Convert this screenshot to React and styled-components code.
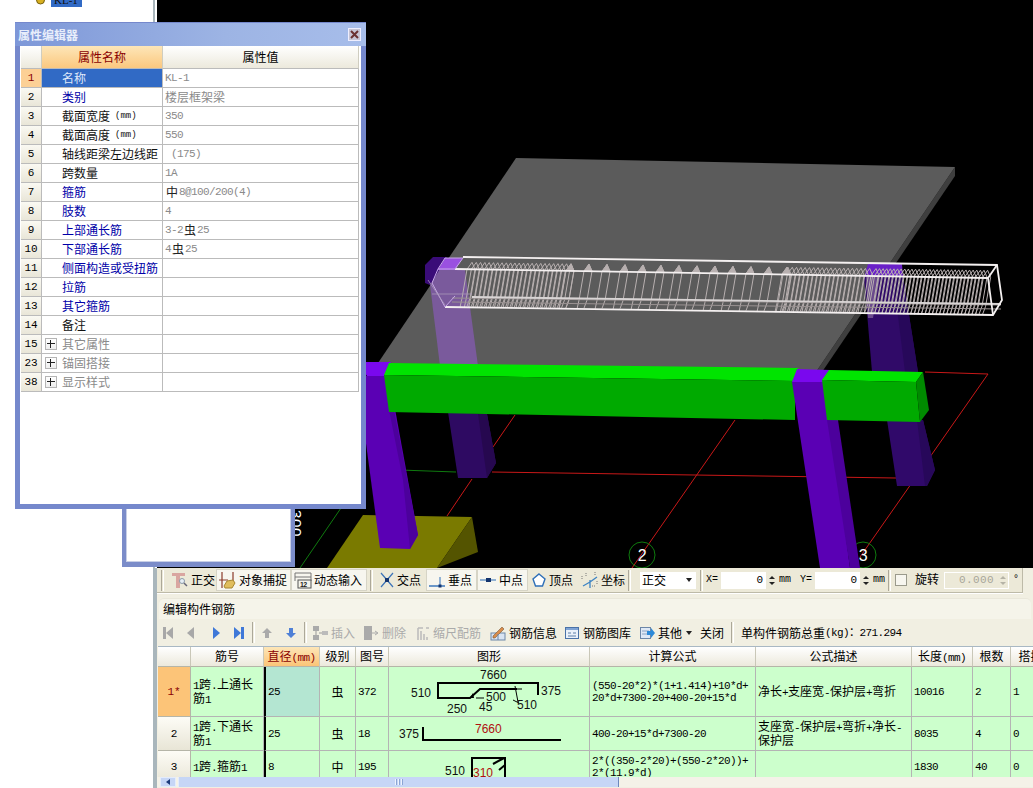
import React from "react";
import styled, { createGlobalStyle } from "styled-components";

const Global = createGlobalStyle`
  html, body { margin: 0; padding: 0; background: #fff; overflow: hidden; }
  body { width: 1033px; height: 788px; font-family: "Liberation Mono", "Noto Sans CJK SC", monospace; font-size: 11px; letter-spacing: -0.6px; color: #000; }
  * { box-sizing: border-box; }
`;

const Page = styled.div`display: flex; width: 1033px; height: 788px; overflow: hidden; position: relative;`;
const Sidebar = styled.aside`width: 155px; flex: none; background: #fff; border-right: 2px solid #a9b6bc; overflow: hidden;`;
const TreeRow = styled.div`display: flex; align-items: center; gap: 6px; height: 14px; margin-top: -7px; padding-left: 36px;`;
const TreeLabel = styled.span`background: #316ac5; width: 31px; height: 14px; line-height: 14px; padding-left: 3px; font-family: "Liberation Serif", serif; font-size: 11px; letter-spacing: 0; color: #111;`;
const Main = styled.main`flex: 1; min-width: 0; display: flex; flex-direction: column;`;
const Viewport = styled.div`height: 568px; background: #000; margin-left: 2px; flex: none; svg { display: block; }`;
const Bottom = styled.section`flex: 1; min-height: 0; background: #f1efe2; border-left: 2px solid #a9b6bc; display: flex; flex-direction: column; overflow: hidden;`;

const Han = styled.span`font-family: "Noto Sans CJK SC", sans-serif; font-size: 12px; letter-spacing: 0;`;
const T = ({ children }) => String(children).split(/([^\x00-\x7f：]+)/).map((s, i) => (i % 2 ? <Han key={i}>{s}</Han> : s));

const SnapBar = styled.div`display: flex; align-items: center; height: 25px; width: 866px; flex: none; padding-left: 4px; background: #ece9d8; border-bottom: 1px solid #bdbaa8; border-right: 1px solid #bdbaa8; box-shadow: 0 1px 0 #fff;`;
const Grip = styled.span`width: 3px; height: 21px; flex: none; border-left: 1px solid #aca899; border-right: 1px solid #fff; margin: 0 ${p => p.$r ?? 3}px 0 ${p => p.$l ?? 0}px;`;
const SnapBtn = styled.div`
  display: flex; align-items: center; gap: 2px; height: 22px; flex: none; width: ${p => p.$w}px; padding-left: 2px; line-height: 14px;
  background: ${p => (p.$on ? "#f7f6ef" : "transparent")};
  border: 1px solid ${p => (p.$on ? "#d6d4c6" : "transparent")};
`;
const Combo = styled.div`width: 56px; height: 17px; flex: none; background: #fff; display: flex; justify-content: space-between; align-items: center; padding: 0 4px 0 2px; margin-right: 4px; line-height: 14px;`;
const Caret = styled.span`width: 0; height: 0; border: 3px solid transparent; border-top: 4px solid #222; border-bottom: 0; margin-left: ${p => p.$l ?? 0}px;`;
const Label = styled.span`flex: none; width: ${p => p.$w}px; margin-left: ${p => p.$l ?? 0}px; line-height: 14px; font-size: 10px; letter-spacing: 0;`;
const Spin = styled.div`
  width: ${p => p.$w ?? 56}px; height: 17px; flex: none; background: ${p => (p.$off ? "#ece9d8" : "#fff")}; border: ${p => (p.$off ? "1px solid #fff" : "0")}; display: flex; align-items: center; justify-content: flex-end;
  color: ${p => (p.$off ? "#a8a698" : "#000")}; font-size: 11px; letter-spacing: ${p => (p.$off ? "0.4px" : 0)};
`;
const SpinArrows = styled.span`width: 11px; margin-left: 3px; height: 100%; display: flex; flex-direction: column; align-items: center; justify-content: center; gap: 3px; background: ${p => (p.$off ? "transparent" : "#ece9d8")};
  i { width: 0; height: 0; border: 3px solid transparent; border-bottom: 3px solid ${p => (p.$off ? "#b5b3a6" : "#222")}; border-top: 0; }
  i + i { border-top: 3px solid ${p => (p.$off ? "#b5b3a6" : "#222")}; border-bottom: 0; }
`;
const Check = styled.span`width: 12px; height: 12px; flex: none; background: #f7f6ef; border: 1px solid #9a9a8c; margin: 0 8px 0 4px;`;

const TitleBar = styled.div`height: 21px; margin: 5px 0 0 2px; width: 872px; flex: none; background: #f5f4ea; border-radius: 5px 5px 0 0; display: flex; align-items: center; padding-left: 4px; line-height: 14px; border-top: 1px solid #e9e7da;`;
const ActionBar = styled.div`display: flex; align-items: center; height: 27px; flex: none; line-height: 14px; white-space: nowrap;`;
const ActBtn = styled.div`display: flex; align-items: center; gap: 3px; flex: none; width: ${p => p.$w}px; color: ${p => (p.$off ? "#aaa" : "#000")};`;
const NavBtn = styled.div`width: ${p => p.$w ?? 24}px; flex: none; display: flex; justify-content: center;`;

const SheetWrap = styled.div`height: 131px; margin-left: 1px; flex: none; overflow: hidden; border-top: 1px solid #a9b8c4;`;
const Sheet = styled.div`display: grid; width: 893px; grid-template-columns: 33px 73px 56px 36px 33px 201px 166px 156px 61px 38px 40px; grid-template-rows: 20px 50px 34px 33px;`;
const Head = styled.div`
  display: flex; align-items: center; justify-content: center; line-height: 14px; white-space: nowrap;
  border-right: 1px solid #c9c7b8; border-bottom: 1px solid #b5b5a8;
  background: ${p => (p.$on ? "linear-gradient(#fde6b8,#fbc477)" : "linear-gradient(#fff,#ece9dc)")};
  color: ${p => (p.$on ? "#8a0000" : "#000")};
`;
const RowHead = styled.div`
  display: flex; align-items: center; justify-content: center; font-size: 11px; letter-spacing: 0;
  border-right: 1px solid #b5b5a8; border-bottom: 1px solid #b5b5a8;
  background: ${p => (p.$on ? "#fcc478" : "linear-gradient(#fdfcf6,#e8e5d6)")};
  color: ${p => (p.$on ? "#8a0000" : "#000")};
`;
const Cell = styled.div`
  display: flex; align-items: center; justify-content: ${p => (p.$center ? "center" : "flex-start")};
  padding: ${p => (p.$flush ? 0 : "0 2px")}; line-height: 12px; overflow: hidden;
  background: ${p => (p.$sel ? "#b4e6d2" : "#ccffcc")};
  border-right: 1px solid #b4b4b4; border-bottom: 1px solid #b4b4b4;
  ${p => p.$freeze && "border-left: 2px solid #000;"}
  svg { display: block; }
  ${Han} { line-height: 12px; }
`;
const Scroll = styled.div`height: 10px; flex: none; display: flex; background: #f4f2e8;`;
const ScrollLeft = styled.div`width: 16px; margin-left: 3px; background: #c6d6f6; border: 1px solid #e4ecfb; display: flex; align-items: center; justify-content: center;
  i { width: 0; height: 0; border: 3px solid transparent; border-right: 4px solid #1c3a7a; border-left: 0; }`;
const ScrollThumb = styled.div`width: 441px; margin-left: 2px; background: #c6d6f6; border-right: 1px solid #6c88bc; border-left: 1px solid #e4ecfb; display: flex; justify-content: center; align-items: center; gap: 1px;
  i { width: 1px; height: 6px; background: #eef3fd; box-shadow: 1px 0 #8ba5d4; margin-right: 1px; }`;

const Win2 = styled.div`position: absolute; left: 122px; top: 300px; width: 173px; height: 267px; background: #fff; border: 4px solid #7b8cc9; border-width: 4px 4px 5px 4px; box-shadow: inset 0 0 0 1px #c8cfe6;`;
const Dialog = styled.div`position: absolute; left: 15px; top: 22px; width: 351px; height: 487px; background: #fff; border-style: solid; border-color: #7588cc; border-width: 1px 5px 5px 5px; display: flex; flex-direction: column;`;
const DlgTitle = styled.div`height: 23px; flex: none; margin: 0 -5px; padding: 0 5px 0 3px; display: flex; justify-content: space-between; align-items: center; background: linear-gradient(90deg,#7d97d8,#9db4e4 60%,#a7bdea); color: #e8eefb; font-family: "Noto Sans CJK SC", sans-serif; font-size: 12px; letter-spacing: 0; font-weight: 700; line-height: 14px;`;
const CloseBtn = styled.span`width: 13px; height: 13px; background: #c7c4d4; border: 1px solid #eef; display: flex; svg { display: block; }`;
const DlgGrid = styled.div`display: grid; grid-template-columns: 21px 121px 196px; grid-template-rows: 23px repeat(17, 19px); margin-left: 1px; font-family: "Noto Sans CJK SC", sans-serif; font-size: 12px; letter-spacing: 0; line-height: 14px;`;
const DHead = styled.div`
  display: flex; align-items: center; justify-content: center; border-right: 1px solid #cfcdc0; border-bottom: 1px solid #bbb;
  background: ${p => (p.$on ? "linear-gradient(#fde6b8,#fbc87f)" : "linear-gradient(#fff,#ece9dc)")};
  color: ${p => (p.$on ? "#8a0000" : "#000")};
`;
const DIndex = styled.div`
  display: flex; align-items: center; justify-content: center; font-family: "Liberation Mono", monospace; font-size: 11px;
  border-right: 1px solid #bbb; border-bottom: 1px solid #bbb;
  background: ${p => (p.$on ? "#fcd095" : "linear-gradient(#faf9f2,#e9e6d8)")};
  color: ${p => (p.$on ? "#8a0000" : "#000")};
`;
const toneColor = { blue: "#0000a8", black: "#111", gray: "#8a8a8a", sel: "#dfe8fa" };
const DName = styled.div`
  display: flex; align-items: center; gap: 5px; padding-left: ${p => (p.$plus ? 3 : 20)}px; white-space: nowrap;
  border-right: 1px solid #bbb; border-bottom: 1px solid #bbb;
  background: ${p => (p.$sel ? "#316ac5" : "#fff")}; color: ${p => toneColor[p.$tone]};
  small { font-family: "Liberation Mono", monospace; font-size: 9px; }
`;
const DVal = styled.div`
  display: flex; align-items: center; padding-left: 2px; color: #8a8a8a; white-space: pre;
  border-right: 1px solid #bbb; border-bottom: 1px solid #bbb; background: #fff;
  font-family: "Liberation Mono", "Noto Sans CJK SC", monospace; font-size: 11px; letter-spacing: -0.6px;
`;
const ValHan = styled.span`font-family: "Noto Sans CJK SC", sans-serif; font-size: 12px; letter-spacing: 0;`;
const Rebar = styled.span`font-family: "Noto Sans CJK SC", sans-serif; font-size: 12px; letter-spacing: 0; color: #222; margin: 0 1px;`;
const Plus = styled.span`width: 12px; height: 12px; flex: none; border: 1px solid #b5b5b5; background: linear-gradient(#fff,#eee); position: relative;
  &::before { content: ""; position: absolute; left: 1px; right: 1px; top: 4px; height: 1px; background: #222; }
  &::after { content: ""; position: absolute; top: 1px; bottom: 1px; left: 4px; width: 1px; background: #222; }`;

const Ic = ({ w = 16, h = 16, children }) => <svg width={w} height={h} viewBox={`0 0 ${w} ${h}`} style={{ flex: "none", display: "block" }}>{children}</svg>;
const I = {
  ortho: <Ic w={19} h={18}><path d="M2 2h13v3H10v12H6V5H2z" fill="#d9a5a0" /><circle cx="12" cy="10" r="2.5" fill="#e6eef5" stroke="#8c9aa8" /><path d="M14 12l3 3" stroke="#667" strokeWidth="1.5" /></Ic>,
  snap: <Ic w={18} h={18}><path d="M3 1v16M14 1v10M0 9h9" stroke="#8a3a2a" strokeWidth="1.2" /><path d="M5 15l3-5 6-1 2 3-3 5H6z" fill="#e0bd5c" stroke="#a88630" /></Ic>,
  dyn: <Ic w={18} h={18}><path d="M1 2h16M1 6h16M1 2v8M17 2v8" stroke="#777" fill="none" /><rect x="4" y="9" width="13" height="8" fill="#f4f4ec" stroke="#555" /><text x="6" y="16" fontFamily="Liberation Sans" fontSize="7" fontWeight="700" fill="#222">12</text></Ic>,
  cross: <Ic><path d="M2 1l12 14M14 1L2 15" stroke="#3d74b8" strokeWidth="1.2" /><rect x="6" y="6" width="4" height="4" fill="#14346e" /></Ic>,
  perp: <Ic w={17}><path d="M0 14h16" stroke="#2e6fb8" strokeWidth="1.4" /><path d="M11 5v10" stroke="#2e6fb8" /><rect x="9.5" y="12.5" width="3" height="3" fill="#14346e" /></Ic>,
  mid: <Ic w={17}><path d="M0 8h16" stroke="#5a8bc4" strokeWidth="1.3" /><rect x="6" y="6" width="5" height="4" fill="#14346e" /></Ic>,
  pent: <Ic><path d="M8 2l6 5-2.5 7h-7L2 7z" fill="#fff" stroke="#2e6fb8" strokeWidth="1.4" /></Ic>,
  coord: <Ic w={18} h={18}><path d="M9 9v8M9 11L2 15M9 11l7-5" stroke="#3d84c4" strokeWidth="1.3" /><path d="M1 5v4M5 2v3M14 1v3M16 10v4M11 15h3" stroke="#777" strokeDasharray="1 1" /></Ic>,
  first: c => <Ic w={12} h={14}><rect x="1" y="1" width="3" height="12" fill={c} /><path d="M11 1v12L4 7z" fill={c} /></Ic>,
  prev: c => <Ic w={10} h={14}><path d="M8 1v12L1 7z" fill={c} /></Ic>,
  next: c => <Ic w={10} h={14}><path d="M2 1v12l7-6z" fill={c} /></Ic>,
  last: c => <Ic w={12} h={14}><rect x="8" y="1" width="3" height="12" fill={c} /><path d="M1 1v12l7-6z" fill={c} /></Ic>,
  up: <Ic w={12} h={12}><path d="M6 1l5 5H8v5H4V6H1z" fill="#aaa" /></Ic>,
  down: <Ic w={12} h={12}><path d="M6 11l5-5H8V1H4v5H1z" fill="#4f80d6" /></Ic>,
  insert: <Ic><rect x="1" y="1" width="6" height="5" fill="#aaa" /><rect x="1" y="10" width="6" height="5" fill="#aaa" /><rect x="10" y="6" width="6" height="4" fill="#bbb" /><path d="M4 6v4M7 8h3" stroke="#999" /></Ic>,
  del: <Ic><rect x="1" y="1" width="8" height="14" fill="#aaa" /><path d="M9 8h5M12 6l3 2-3 2" stroke="#aaa" fill="none" /></Ic>,
  scale: <Ic w={14}><path d="M2 3v12M5 6v9M8 9v6M11 12v3M2 3h5M10 3h3" stroke="#bbb" strokeWidth="1.5" /></Ic>,
  info: <Ic><rect x="1" y="8" width="14" height="7" fill="#d9e4f2" stroke="#6d87a8" /><path d="M3 11L12 2l2 2-9 9H3z" fill="#d98c4a" stroke="#7a5a3a" strokeWidth=".6" /><path d="M8 9v6" stroke="#6d87a8" /></Ic>,
  lib: <Ic><rect x="1.5" y="2.5" width="13" height="11" fill="#eaf1fa" stroke="#4a72a8" /><rect x="2" y="3" width="12" height="2" fill="#7fa3d4" /><path d="M4 8h3M9 8h3M4 11h8" stroke="#5c7fa8" /></Ic>,
  other: <Ic><rect x="1.5" y="2.5" width="10" height="11" fill="#dfe9f6" stroke="#6d87a8" /><path d="M3 6h7M3 9h7" stroke="#8aa2c2" /><path d="M8 6h4V3l4 5-4 5v-3H8z" fill="#2e8ad8" /></Ic>,
};

const range = (a, b, s) => { const o = []; for (let x = a; x < b; x += s) o.push(x); return o; };
const denseX = [...range(466, 565, 4.3), ...range(782, 866, 4.3), ...range(870, 985, 3.6)];
const sparseX = range(565, 782, 18);
const slope = x => ((x - 446) / 550) * 8.5;

const Stirrup = ({ x, tri }) => {
  const d = slope(x);
  return (
    <>
      <path d={`M${x + 6} ${262 + d}L${x + 1} ${269 + d}L${x - 4} ${298 + d}L${x - 6} ${307 + d}M${x + 6} ${262 + d}L${x + 9} ${269 + d}L${x + 4} ${298 + d}L${x + 1} ${306 + d}`} />
      {tri && <path d={`M${x + 6} ${262 + d}L${x + 1} ${269 + d}L${x + 9} ${269 + d}z`} fill="#b8b0b0" />}
    </>
  );
};

const Scene = () => (
  <svg width="876" height="568" viewBox="157 0 876 568">
    <g fill="none" strokeWidth="1">
      <path d="M925 372L988 374L860 557M735 420L632 568M515 415L493 447M472 479L447 516M492 472L896 478" stroke="#c81818" />
      <path d="M400 470L456 472M341 508L300 568" stroke="#0f7a0f" />
      <circle cx="642" cy="555" r="13" stroke="#0f7a0f" />
      <circle cx="863" cy="555" r="13" stroke="#0f7a0f" />
    </g>
    <text x="642" y="561" textAnchor="middle" fill="#fff" fontFamily="Liberation Sans" fontSize="16">2</text>
    <text x="863" y="561" textAnchor="middle" fill="#fff" fontFamily="Liberation Sans" fontSize="16">3</text>
    <text x="0" y="0" transform="translate(291 510) rotate(90)" fill="#fff" fontFamily="Liberation Sans" fontSize="15" letterSpacing=".7">300</text>
    {/* footing */}
    <path d="M363 515L472 517L437 568H327z" fill="#7a7a00" />
    <path d="M472 517L478 552L437 568z" fill="#545400" />
    {/* slab */}
    <path d="M955 167L955 176L822 372L816 372z" fill="#3f3f3f" />
    <path d="M516 158L955 167L816 372L376 366z" fill="#5b5b5b" />
    {/* back-left column */}
    <path d="M438 270L465 270L478 366L440 366L430 285z" fill="#7a5a9c" />
    <path d="M425 265L433 257L447 257L438 272L430 285L425 283z" fill="#3a0c78" />
    <path d="M445 258L463 258L455 270L438 270z" fill="#9a50e0" />
    <path d="M448 412L487 414L496 463L487 478L458 478z" fill="#2e0a62" />
    <path d="M478 414L487 414L496 463L487 478z" fill="#26084f" />
    {/* back-right column */}
    <path d="M864 277L903 277L918 372L872 372z" fill="#300a68" />
    <path d="M866 277L880 277L873 318L868 318z" fill="#6a4a8c" />
    <path d="M868 264L902 264L903 277L864 277z" fill="#6a20c8" />
    <path d="M903 277L918 372L905 372L893 277z" fill="#27085a" />
    <path d="M887 420L923 420L935 470L927 486L897 486z" fill="#30096a" />
    <path d="M917 420L923 420L935 470L927 486L925 486z" fill="#27085a" />
    {/* wire beam */}
    <g stroke="#b8b0b0" strokeWidth="1" fill="none">
      {denseX.map(x => <Stirrup key={x} x={x} />)}
      {sparseX.map(x => <Stirrup key={x} x={x} tri />)}
      <path d="M452 298L1001 305M452 302L1001 309" stroke="#9a9292" />
    </g>
    <path d="M472 297L1001 304" stroke="#d8d4d4" strokeWidth="1.8" fill="none" />
    <g fill="none" stroke="#f4f0f0" strokeWidth="1.8">
      <path d="M463 257L997 265L1002 300L993 315L445 307" />
      <path d="M455 269L988 278L997 265M988 278L993 315" />
      <path d="M445 258H463L455 269H438L445 258zM438 269L432 283L445 307L455 296" stroke="#c8a8e8" strokeWidth="1" />
      <path d="M428 280L445 305M432 294H472" stroke="#a898b8" strokeWidth=".8" />
    </g>
    {/* front-left column */}
    <path d="M357 362L391 362L384 376L367 376z" fill="#7a08ee" />
    <path d="M357 376L389 376L418 535L410 549L380 548z" fill="#5a00b4" />
    <path d="M389 410L394 410L418 535L410 549L403 480z" fill="#4c009c" />
    {/* beam */}
    <path d="M389 363L798 368L795 381L384 375z" fill="#00e400" />
    <path d="M384 375L795 381L795 420L389 412z" fill="#00aa00" />
    {/* front-right column */}
    <path d="M797 369L830 370L826 382L792 382z" fill="#7a08ee" />
    <path d="M792 382L826 382L850 568H820z" fill="#5a00b4" />
    <path d="M827 420L838 420L860 568H850z" fill="#4c009c" />
    {/* beam right part */}
    <path d="M829 370L923 372L916 382L822 380z" fill="#00e400" />
    <path d="M822 380L916 382L920 422L827 420z" fill="#00aa00" />
    <path d="M923 372L929 410L920 422L916 382z" fill="#008a00" />
  </svg>
);

const props = [
  ["1", "名称", "sel", "KL-1"],
  ["2", "类别", "blue", <ValHan>楼层框架梁</ValHan>],
  ["3", <>截面宽度<small>(mm)</small></>, "black", "350"],
  ["4", <>截面高度<small>(mm)</small></>, "black", "550"],
  ["5", "轴线距梁左边线距", "black", " (175)"],
  ["6", "跨数量", "black", "1A"],
  ["7", "箍筋", "blue", <><Rebar>中</Rebar>8@100/200(4)</>],
  ["8", "肢数", "blue", "4"],
  ["9", "上部通长筋", "blue", <>3-2<Rebar>虫</Rebar>25</>],
  ["10", "下部通长筋", "blue", <>4<Rebar>虫</Rebar>25</>],
  ["11", "侧面构造或受扭筋", "blue", ""],
  ["12", "拉筋", "blue", ""],
  ["13", "其它箍筋", "blue", ""],
  ["14", "备注", "black", ""],
  ["15", "其它属性", "gray", "", true],
  ["23", "锚固搭接", "gray", "", true],
  ["38", "显示样式", "gray", "", true],
];

const ShapeText = styled.text`font-family: "Liberation Sans", sans-serif; font-size: 12px; letter-spacing: 0; fill: ${p => p.$c ?? "#111"};`;
const Shape1 = () => (
  <svg width="200" height="49" viewBox="389 667 200 49">
    <path d="M538 695V683H438V698H470L480 689H517" fill="none" stroke="#000" strokeWidth="2" />
    <path d="M515 686L518 702M512 689h10M513 700l6 3" stroke="#000" fill="none" />
    <path d="M470 698l3-5 1 5z" fill="#000" />
    <path d="M476 698H484" stroke="#000" />
    <ShapeText x="480" y="679">7660</ShapeText>
    <ShapeText x="411" y="697">510</ShapeText>
    <ShapeText x="541" y="695">375</ShapeText>
    <ShapeText x="486" y="701">500</ShapeText>
    <ShapeText x="447" y="713">250</ShapeText>
    <ShapeText x="479" y="711">45</ShapeText>
    <ShapeText x="517" y="709">510</ShapeText>
  </svg>
);
const Shape2 = () => (
  <svg width="200" height="33" viewBox="389 717 200 33">
    <path d="M423 727V740H561" fill="none" stroke="#000" strokeWidth="2" />
    <ShapeText x="399" y="738">375</ShapeText>
    <ShapeText x="475" y="733" $c="#b01010">7660</ShapeText>
  </svg>
);
const Shape3 = () => (
  <svg width="200" height="32" viewBox="389 751 200 32">
    <path d="M472 790V758H505V790M493 764l11-6M499 770l6-5" fill="none" stroke="#000" strokeWidth="2" />
    <ShapeText x="445" y="775">510</ShapeText>
    <ShapeText x="473" y="777" $c="#b01010">310</ShapeText>
  </svg>
);

const heads = ["", "筋号", "直径(mm)", "级别", "图号", "图形", "计算公式", "公式描述", "长度(mm)", "根数", "搭接"];

export default function App() {
  return (
    <Page>
      <Global />
      <Sidebar>
        <TreeRow>
          <svg width="9" height="14" viewBox="0 0 9 14"><circle cx="4.5" cy="7" r="4" fill="#d8b020" stroke="#776010" /></svg>
          <TreeLabel>KL-1</TreeLabel>
        </TreeRow>
      </Sidebar>
      <Main>
        <Viewport><Scene /></Viewport>
        <Bottom>
          <SnapBar>
            <Grip />
            <SnapBtn $w={49}>{I.ortho}<T>正交</T></SnapBtn>
            <SnapBtn $w={75} $on>{I.snap}<T>对象捕捉</T></SnapBtn>
            <SnapBtn $w={76} $on>{I.dyn}<T>动态输入</T></SnapBtn>
            <Grip $l={3} $r={3} />
            <SnapBtn $w={50}>{I.cross}<T>交点</T></SnapBtn>
            <SnapBtn $w={51} $on>{I.perp}<T>垂点</T></SnapBtn>
            <SnapBtn $w={51} $on>{I.mid}<T>中点</T></SnapBtn>
            <SnapBtn $w={50}>{I.pent}<T>顶点</T></SnapBtn>
            <SnapBtn $w={49}>{I.coord}<T>坐标</T></SnapBtn>
            <Grip $l={1} $r={9} />
            <Combo><T>正交</T><Caret /></Combo>
            <Grip $r={3} />
            <Label $w={15}>X=</Label>
            <Spin>0<SpinArrows><i /><i /></SpinArrows></Spin>
            <Label $w={21} $l={2}>mm</Label>
            <Label $w={15}>Y=</Label>
            <Spin>0<SpinArrows><i /><i /></SpinArrows></Spin>
            <Label $w={15} $l={2}>mm</Label>
            <Grip $r={0} />
            <Check />
            <Label $w={29}><T>旋转</T></Label>
            <Spin $off $w={65}>0.000<SpinArrows $off><i /><i /></SpinArrows></Spin>
            <Label $w={8} $l={4}>°</Label>
          </SnapBar>
          <TitleBar><T>编辑构件钢筋</T></TitleBar>
          <ActionBar>
            <NavBtn $w={21}>{I.first("#a8a8a8")}</NavBtn>
            <NavBtn $w={26}>{I.prev("#a8a8a8")}</NavBtn>
            <NavBtn $w={23}>{I.next("#3f78d8")}</NavBtn>
            <NavBtn $w={23}>{I.last("#3f78d8")}</NavBtn>
            <Grip $l={2} $r={0} />
            <NavBtn>{I.up}</NavBtn>
            <NavBtn>{I.down}</NavBtn>
            <Grip $l={1} $r={5} />
            <ActBtn $w={51} $off>{I.insert}<T>插入</T></ActBtn>
            <ActBtn $w={53} $off>{I.del}<T>删除</T></ActBtn>
            <ActBtn $w={74} $off>{I.scale}<T>缩尺配筋</T></ActBtn>
            <ActBtn $w={74}>{I.info}<T>钢筋信息</T></ActBtn>
            <ActBtn $w={75}>{I.lib}<T>钢筋图库</T></ActBtn>
            <ActBtn $w={61}>{I.other}<T>其他</T><Caret $l={1} /></ActBtn>
            <ActBtn $w={30}><T>关闭</T></ActBtn>
            <Grip $l={1} $r={7} />
            <T>单构件钢筋总重(kg)：271.294</T>
          </ActionBar>
          <SheetWrap>
            <Sheet>
              {heads.map((h, i) => <Head key={i} $on={i === 2}><span><T>{h}</T></span></Head>)}

              <RowHead $on>1*</RowHead>
              <Cell><span><T>1跨.上通长筋1</T></span></Cell>
              <Cell $sel $freeze>25</Cell>
              <Cell $center><Han>虫</Han></Cell>
              <Cell>372</Cell>
              <Cell $flush><Shape1 /></Cell>
              <Cell><span>(550-20*2)*(1+1.414)+10*d+<br />20*d+7300-20+400-20+15*d</span></Cell>
              <Cell><span><T>净长+支座宽-保护层+弯折</T></span></Cell>
              <Cell>10016</Cell>
              <Cell>2</Cell>
              <Cell>1</Cell>

              <RowHead>2</RowHead>
              <Cell><span><T>1跨.下通长筋1</T></span></Cell>
              <Cell $freeze>25</Cell>
              <Cell $center><Han>虫</Han></Cell>
              <Cell>18</Cell>
              <Cell $flush><Shape2 /></Cell>
              <Cell>400-20+15*d+7300-20</Cell>
              <Cell><span><T>支座宽-保护层+弯折+净长-保护层</T></span></Cell>
              <Cell>8035</Cell>
              <Cell>4</Cell>
              <Cell>0</Cell>

              <RowHead>3</RowHead>
              <Cell><span><T>1跨.箍筋1</T></span></Cell>
              <Cell $freeze>8</Cell>
              <Cell $center><Han>中</Han></Cell>
              <Cell>195</Cell>
              <Cell $flush><Shape3 /></Cell>
              <Cell><span>2*((350-2*20)+(550-2*20))+<br />2*(11.9*d)</span></Cell>
              <Cell />
              <Cell>1830</Cell>
              <Cell>40</Cell>
              <Cell>0</Cell>
            </Sheet>
          </SheetWrap>
          <Scroll>
            <ScrollLeft><i /></ScrollLeft>
            <ScrollThumb><i /><i /><i /></ScrollThumb>
          </Scroll>
        </Bottom>
      </Main>

      <Win2 />
      <Dialog>
        <DlgTitle>
          属性编辑器
          <CloseBtn>
            <svg width="11" height="11" viewBox="0 0 11 11"><path d="M2 2l7 7M9 2l-7 7" stroke="#6a3030" strokeWidth="2" /></svg>
          </CloseBtn>
        </DlgTitle>
        <DlgGrid>
          <DHead />
          <DHead $on>属性名称</DHead>
          <DHead>属性值</DHead>
          {props.map(([n, name, tone, val, plus]) => (
            <React.Fragment key={n}>
              <DIndex $on={n === "1"}>{n}</DIndex>
              <DName $tone={tone} $sel={tone === "sel"} $plus={plus}>{plus && <Plus />}{name}</DName>
              <DVal>{val}</DVal>
            </React.Fragment>
          ))}
        </DlgGrid>
      </Dialog>
    </Page>
  );
}
